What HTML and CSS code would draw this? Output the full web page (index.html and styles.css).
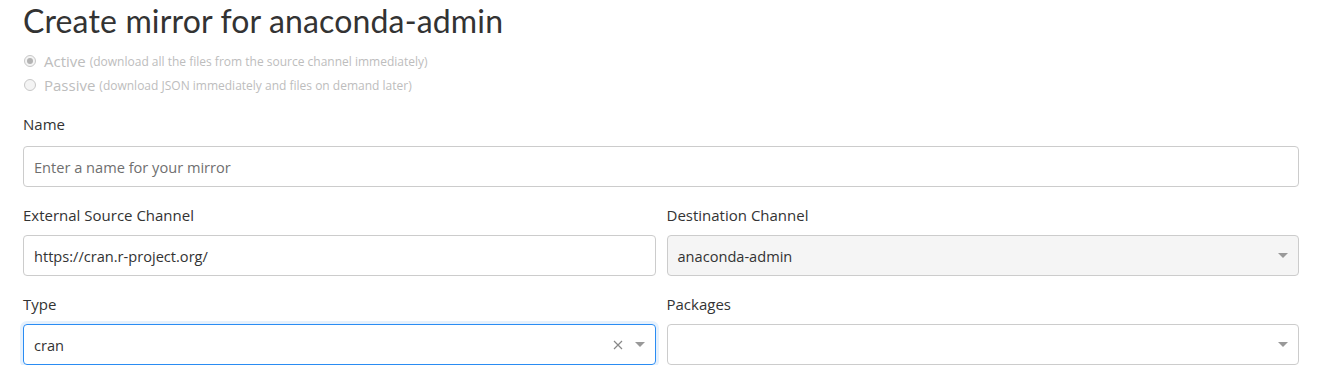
FILE: index.html
```html
<!DOCTYPE html>
<html lang="en">
<head>
    <meta charset="UTF-8">
    <meta name="viewport" content="width=device-width, initial-scale=1.0">
    <title>Create mirror</title>
    <link rel="stylesheet" href="styles.css">
</head>
<body>
    <div class="page">
        <h1 class="title">Create mirror for anaconda-admin</h1>

        <div class="modes">
            <label class="mode">
                <span class="radio checked"></span>
                <span class="mode-name">Active</span>
                <small>(download all the files from the source channel immediately)</small>
            </label>
            <label class="mode">
                <span class="radio"></span>
                <span class="mode-name">Passive</span>
                <small>(download JSON immediately and files on demand later)</small>
            </label>
        </div>

        <div class="field field-name">
            <label class="field-label">Name</label>
            <div class="control">
                <span class="placeholder">Enter a name for your mirror</span>
            </div>
        </div>

        <div class="row">
            <div class="field">
                <label class="field-label">External Source Channel</label>
                <div class="control">https://cran.r-project.org/</div>
            </div>
            <div class="field">
                <label class="field-label">Destination Channel</label>
                <div class="control select disabled">
                    <span class="value">anaconda-admin</span>
                    <span class="arrow"></span>
                </div>
            </div>
        </div>

        <div class="row">
            <div class="field">
                <label class="field-label">Type</label>
                <div class="control select focused">
                    <span class="value">cran</span>
                    <svg class="clear" width="10" height="10" viewBox="0 0 10 10">
                        <path d="M1 1 L9 9 M9 1 L1 9" stroke="#888" stroke-width="1.2" fill="none"/>
                    </svg>
                    <span class="arrow"></span>
                </div>
            </div>
            <div class="field">
                <label class="field-label">Packages</label>
                <div class="control select">
                    <span class="value"></span>
                    <span class="arrow"></span>
                </div>
            </div>
        </div>
    </div>
</body>
</html>
```

FILE: styles.css
```css
* {
    box-sizing: border-box;
    margin: 0;
    padding: 0;
}

body {
    font-family: "Open Sans", "Noto Sans", sans-serif;
    color: #333;
    background: #fff;
}

.page {
    padding: 0 18px 0 23px;
}

.title {
    font-family: Lato, "Open Sans", sans-serif;
    font-size: 32px;
    font-weight: 400;
    line-height: 40px;
    color: #333;
    margin-top: 1px;
    letter-spacing: 0.15px;
}

.modes {
    margin-top: 8px;
}

.mode {
    display: flex;
    align-items: center;
    height: 24px;
    color: #bdbdbd;
}

.radio {
    width: 12px;
    height: 12px;
    border: 1px solid #c8c8c8;
    border-radius: 50%;
    margin: 0 8px 0 1px;
    background: #f4f4f4;
    position: relative;
}

.radio.checked::after {
    content: "";
    position: absolute;
    left: 2px;
    top: 2px;
    width: 6px;
    height: 6px;
    border-radius: 50%;
    background: #b3b3b3;
}

.mode-name {
    font-size: 15px;
    margin-right: 4px;
}

.mode small {
    font-size: 12px;
}

.field {
    margin-top: 20px;
}

.field-label {
    display: block;
    font-size: 15px;
    line-height: 18px;
    margin-bottom: 11px;
    color: #333;
}

.field-name {
    margin-top: 18px;
}

.field-name .field-label {
    margin-bottom: 13px;
}

.control {
    height: 41px;
    border: 1px solid #ccc;
    border-radius: 4px;
    padding: 0 10px;
    display: flex;
    align-items: center;
    font-size: 14.6px;
    color: #333;
}

.placeholder {
    color: #6f6f6f;
}

.row {
    display: grid;
    grid-template-columns: 1fr 1fr;
    gap: 11px;
    margin-top: 11px;
}

.row .field {
    margin-top: 8px;
}

.select .value {
    flex: 1;
}

.select.disabled {
    background: #f5f5f5;
}

.select.focused {
    border-color: #2a8cf3;
    box-shadow: 0 0 0 3px #e6f1fd;
}

.clear {
    margin-right: 12px;
}

.arrow {
    width: 0;
    height: 0;
    border-left: 5px solid transparent;
    border-right: 5px solid transparent;
    border-top: 5px solid #999;
}
```
